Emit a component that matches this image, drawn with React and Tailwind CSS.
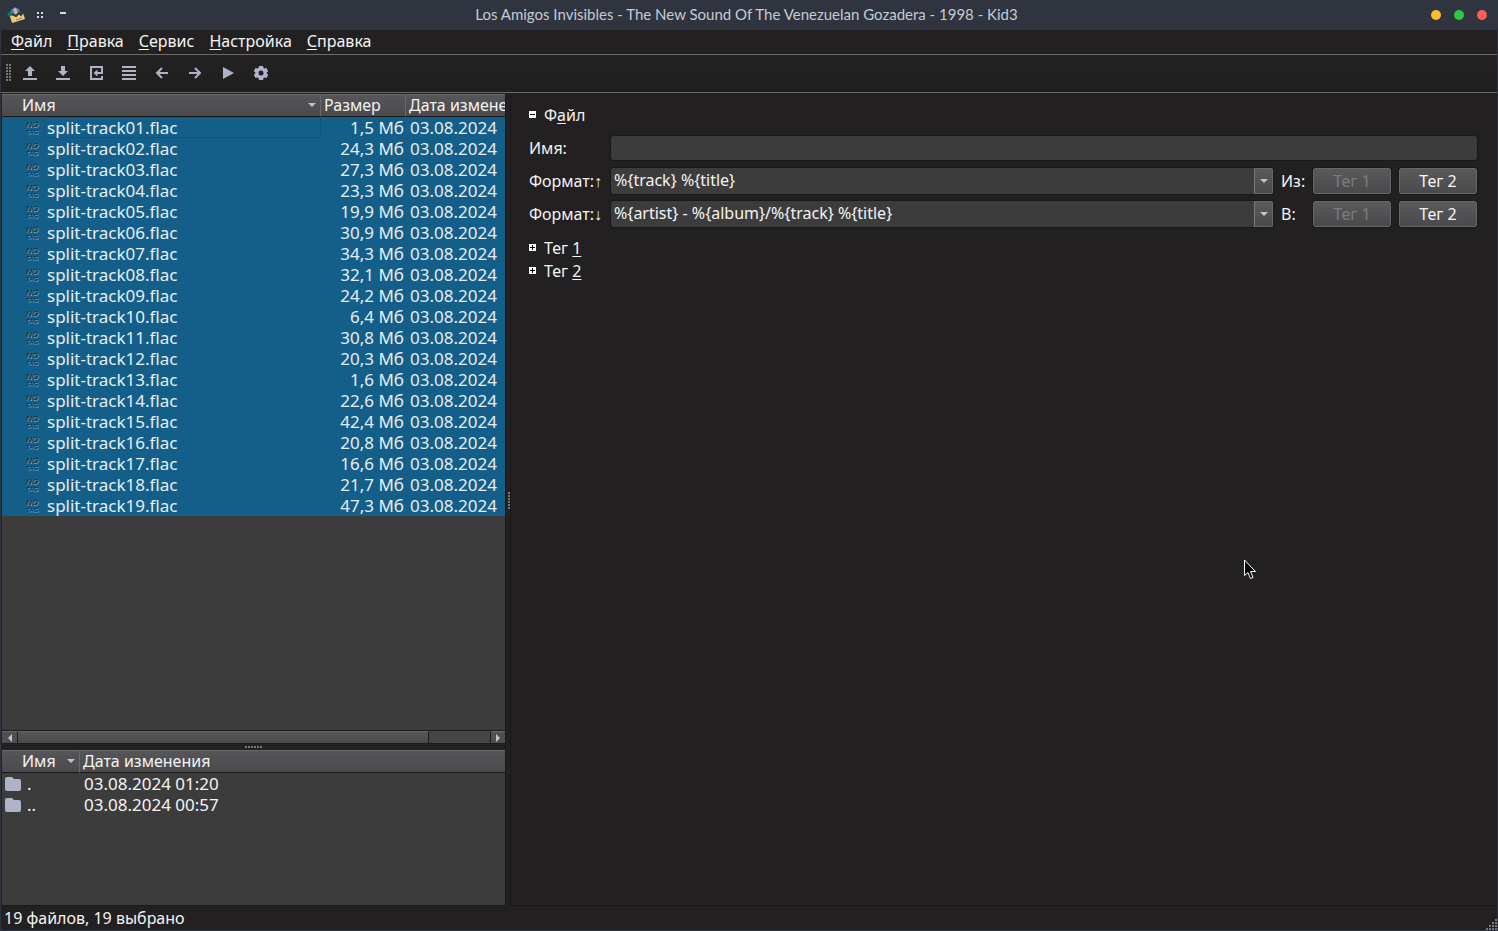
import React, { useState } from 'react';

const files = [
  ['split-track01.flac', '1,5 Мб'],
  ['split-track02.flac', '24,3 Мб'],
  ['split-track03.flac', '27,3 Мб'],
  ['split-track04.flac', '23,3 Мб'],
  ['split-track05.flac', '19,9 Мб'],
  ['split-track06.flac', '30,9 Мб'],
  ['split-track07.flac', '34,3 Мб'],
  ['split-track08.flac', '32,1 Мб'],
  ['split-track09.flac', '24,2 Мб'],
  ['split-track10.flac', '6,4 Мб'],
  ['split-track11.flac', '30,8 Мб'],
  ['split-track12.flac', '20,3 Мб'],
  ['split-track13.flac', '1,6 Мб'],
  ['split-track14.flac', '22,6 Мб'],
  ['split-track15.flac', '42,4 Мб'],
  ['split-track16.flac', '20,8 Мб'],
  ['split-track17.flac', '16,6 Мб'],
  ['split-track18.flac', '21,7 Мб'],
  ['split-track19.flac', '47,3 Мб'],
];

const folders = [
  ['.', '03.08.2024 01:20'],
  ['..', '03.08.2024 00:57'],
];

const menus = [
  ['Ф', 'айл'],
  ['П', 'равка'],
  ['С', 'ервис'],
  ['Н', 'астройка'],
  ['С', 'правка'],
];

const tools = [
  { label: 'Открыть', icon: <path d="M8 1l5 5h-3v5H6V6H3zM1 13h14v2H1z" fill="currentColor" /> },
  { label: 'Сохранить', icon: <path d="M6 1h4v5h3l-5 5-5-5h3zM1 13h14v2H1z" fill="currentColor" /> },
  {
    label: 'Вернуть',
    icon: (
      <>
        <path d="M14 5V2H3v12h11v-3" fill="none" stroke="currentColor" strokeWidth="2" />
        <path d="M15 4v5H9.500v2.500L5.500 8l4-3.500V7H13V4z" fill="currentColor" />
      </>
    ),
  },
  { label: 'Выделить всё', icon: <path d="M1 1h14v2H1zM1 5h14v2H1zM1 9h14v2H1zM1 13h14v2H1z" fill="currentColor" /> },
  { label: 'Предыдущий файл', icon: <path d="M14 8H3M8 3L3 8l5 5" fill="none" stroke="currentColor" strokeWidth="2" /> },
  { label: 'Следующий файл', icon: <path d="M2 8h11M8 3l5 5-5 5" fill="none" stroke="currentColor" strokeWidth="2" /> },
  { label: 'Воспроизвести', icon: <path d="M3 2l11 6-11 6z" fill="currentColor" /> },
  {
    label: 'Настроить',
    icon: (
      <path
        fillRule="evenodd"
        fill="currentColor"
        d="M6 1h4l.5 2 1 .6 2-.6 1.700 3.200L13.700 7.500v1l1.500 1.300L13.500 13l-2-.6-1 .6-.5 2H6l-.5-2-1-.6-2 .6L.8 9.800 2.300 8.500v-1L.8 6.200 2.500 3l2 .6 1-.6zM8 5.500a2.500 2.500 0 1 0 0 5 2.500 2.500 0 0 0 0-5z"
      />
    ),
  },
];

function AppLogo() {
  return (
    <svg width="20" height="18" viewBox="0 0 20 18" aria-hidden="true">
      <path d="M1 8l5-5 3 2-1 8H5z" fill="#0d7182" />
      <path d="M5 4l4-3 4 2 2 5-4 5-5-2z" fill="#5f7896" />
      <path d="M7 3l3-1 2 5-3 2z" fill="#a9bbd2" />
      <path d="M4 10l13-3 2 6-13 4z" fill="#e6cf78" />
      <path d="M6 8l4 2 3-3 2 2 2-3" fill="none" stroke="#3b3526" strokeWidth="2" />
      <path d="M10 14l6-2" stroke="#b5715a" strokeWidth="1" />
    </svg>
  );
}

function NoTagIcon() {
  return (
    <svg width="14" height="16" viewBox="0 0 14 16" className="shrink-0 font-['Liberation_Sans',sans-serif] text-[8px] italic" aria-hidden="true">
      <text x="1" y="8" fill="#8ba9b8">NO</text>
      <text x="0" y="7" fill="#0c2a3a">NO</text>
      <text x="1" y="15" fontSize="6" fill="#8ba9b8">TAG</text>
      <text x="0" y="14" fontSize="6" fill="#0c2a3a">TAG</text>
    </svg>
  );
}

function FolderIcon() {
  return (
    <svg width="16" height="14" viewBox="0 0 16 14" className="shrink-0" aria-hidden="true">
      <path d="M2 0h5l2 2h5q2 0 2 2v8q0 2-2 2H2q-2 0-2-2V2q0-2 2-2z" fill="#aeb3c8" />
    </svg>
  );
}

function DownArrow() {
  return (
    <svg width="8" height="4" viewBox="0 0 8 4" className="shrink-0" aria-hidden="true">
      <path d="M0 0h8L4 4z" fill="#c4c4c4" />
    </svg>
  );
}

function Dots({ className, count }) {
  return (
    <div className={className} aria-hidden="true">
      {Array.from({ length: count }, (_, i) => (
        <span key={i} className="size-[2px] bg-[#777777]" />
      ))}
    </div>
  );
}

function HeaderCell({ children, sorted, last }) {
  return (
    <th
      className={
        'h-[23px] border-b border-t border-b-[#19191a] border-t-[#68686a] bg-linear-to-b from-[#565658] to-[#4a4a4c] p-0 text-left font-normal' +
        (last ? '' : ' border-r border-r-[#68686a]')
      }
    >
      <div className={'flex h-[21px] items-center justify-between pb-px ' + (sorted ? 'pl-5 pr-1' : 'pl-[3px]')}>
        <span className="whitespace-nowrap">{children}</span>
        {sorted && <DownArrow />}
      </div>
    </th>
  );
}

function FileList() {
  return (
    <div className="flex min-h-0 flex-1 flex-col bg-[#3c3c3c]">
      <div className="min-h-0 flex-1 overflow-hidden">
        <table className="w-[575px] table-fixed border-separate border-spacing-0 leading-[21px]">
          <colgroup>
            <col className="w-[319px]" />
            <col className="w-[85px]" />
            <col />
          </colgroup>
          <thead>
            <tr>
              <HeaderCell sorted>Имя</HeaderCell>
              <HeaderCell>Размер</HeaderCell>
              <HeaderCell last>Дата изменения</HeaderCell>
            </tr>
          </thead>
          <tbody className="text-[17px]">
            {files.map(([name, size], i) => (
              <tr key={name} className="h-[21px] bg-[#135f89] text-[#e8eef2]">
                <td className="p-0">
                  <div className="flex h-[21px] items-center gap-1 pl-6">
                    <NoTagIcon />
                    <span className={'flex-1 border pl-[2px] leading-[19px] ' + (i === 0 ? 'border-[#10557b]' : 'border-transparent')}>{name}</span>
                  </div>
                </td>
                <td className="whitespace-nowrap p-0 pr-[2px] text-right">{size}</td>
                <td className="whitespace-nowrap p-0 pl-1">03.08.2024</td>
              </tr>
            ))}
          </tbody>
        </table>
      </div>
      <div className="flex h-[14px] border-y border-[#1b1b1b] bg-[#464648]">
        <button type="button" aria-label="Прокрутить влево" className="flex w-4 items-center justify-center border-r border-t border-r-[#1b1b1b] border-t-[#68686a] bg-[#505052]">
          <svg width="4" height="8" viewBox="0 0 4 8"><path d="M4 0v8L0 4z" fill="#c4c4c4" /></svg>
        </button>
        <div className="flex flex-1">
          <div className="w-[87%] border-r border-t border-r-[#1b1b1b] border-t-[#68686a] bg-linear-to-b from-[#565658] to-[#4a4a4c]" />
        </div>
        <button type="button" aria-label="Прокрутить вправо" className="flex w-[15px] items-center justify-center border-l border-t border-l-[#1b1b1b] border-t-[#68686a] bg-[#505052]">
          <svg width="4" height="8" viewBox="0 0 4 8"><path d="M0 0v8l4-4z" fill="#c4c4c4" /></svg>
        </button>
      </div>
    </div>
  );
}

function FolderList() {
  return (
    <div className="h-[155px] shrink-0 overflow-hidden bg-[#3c3c3c]">
      <table className="w-full table-fixed border-separate border-spacing-0 leading-[21px]">
        <colgroup>
          <col className="w-[78px]" />
          <col />
        </colgroup>
        <thead>
          <tr>
            <HeaderCell sorted>Имя</HeaderCell>
            <HeaderCell last>Дата изменения</HeaderCell>
          </tr>
        </thead>
        <tbody className="text-[17px]">
          {folders.map(([name, date]) => (
            <tr key={name} className="h-[21px]">
              <td className="p-0">
                <div className="flex items-center gap-[6px] pl-[3px]">
                  <FolderIcon />
                  <span>{name}</span>
                </div>
              </td>
              <td className="p-0 pl-1">{date}</td>
            </tr>
          ))}
        </tbody>
      </table>
    </div>
  );
}

function SectionToggle({ open, onClick, children }) {
  return (
    <button type="button" aria-expanded={open} onClick={onClick} className="flex h-[23px] items-center gap-2 text-left">
      <svg width="7" height="7" viewBox="0 0 7 7" aria-hidden="true">
        <path d="M0 0h7v7H0z" fill="#ffffff" />
        <path d={open ? 'M1 3h5v1H1z' : 'M1 3h5v1H1zM3 1h1v5H3z'} fill="#000000" />
      </svg>
      <span className="whitespace-pre">{children}</span>
    </button>
  );
}

function TagButton({ disabled, children }) {
  return (
    <button
      type="button"
      disabled={disabled}
      className="h-[26px] w-[78px] shrink-0 rounded-xs border border-[#68686a] bg-linear-to-b from-[#5a5a5c] to-[#4a4a4c] outline outline-[#19191a] disabled:text-[#7c7c7c]"
    >
      {children}
    </button>
  );
}

function FormatRow({ id, label, format, target }) {
  return (
    <div className="flex h-[26px] items-center">
      <label htmlFor={id} className="w-[82px] shrink-0">{label}</label>
      <div className="relative flex-1">
        <select id={id} className="block h-[26px] w-full appearance-none rounded-xs bg-[#3c3c3c] pb-[2px] pl-[3px] outline outline-[#19191a]">
          <option>{format}</option>
        </select>
        <span className="pointer-events-none absolute inset-y-0 right-0 flex w-[19px] items-center justify-center rounded-r-xs border border-[#68686a] border-l-[#7a7a7c] bg-linear-to-b from-[#5a5a5c] to-[#4a4a4c]">
          <DownArrow />
        </span>
      </div>
      <span className="w-10 shrink-0 pl-2">{target}</span>
      <div className="flex gap-2">
        <TagButton disabled>Тег 1</TagButton>
        <TagButton>Тег 2</TagButton>
      </div>
    </div>
  );
}

function TagPanel() {
  const [fileName, setFileName] = useState('');
  const [fileOpen, setFileOpen] = useState(true);

  return (
    <main className="min-w-0 flex-1 border-b border-l border-[#19191a] pb-4 pl-[18px] pr-5 pt-[9px]">
      <SectionToggle open={fileOpen} onClick={() => setFileOpen(!fileOpen)}>
        Ф<u className="underline-offset-2">а</u>йл
      </SectionToggle>
      {fileOpen && (
        <div className="mb-[9px] mt-[9px] flex flex-col gap-[7px]">
          <div className="flex h-[26px] items-center">
            <label htmlFor="name" className="w-[82px] shrink-0">Имя:</label>
            <input
              id="name"
              type="text"
              value={fileName}
              onChange={(e) => setFileName(e.target.value)}
              className="h-6 min-w-0 flex-1 rounded-xs bg-[#3c3c3c] px-[3px] outline outline-[#19191a]"
            />
          </div>
          <FormatRow id="format-up" label="Формат:↑" format="%{track} %{title}" target="Из:" />
          <FormatRow id="format-down" label="Формат:↓" format="%{artist} - %{album}/%{track} %{title}" target="В:" />
        </div>
      )}
      <SectionToggle>Тег <u className="underline-offset-2">1</u></SectionToggle>
      <SectionToggle>Тег <u className="underline-offset-2">2</u></SectionToggle>
    </main>
  );
}

export default function App() {
  return (
    <div className="relative flex h-screen flex-col overflow-hidden bg-[#2f343f] font-['Noto_Sans',sans-serif] text-base text-[#f4f4f4]">
      <header className="flex h-[30px] shrink-0 items-center px-[6px]">
        <div className="flex flex-1 items-center">
          <AppLogo />
          <svg width="50" height="16" viewBox="0 0 50 16" aria-hidden="true">
            <path d="M11 5h2v2h-2zM15 5h2v2h-2zM11 9h2v2h-2zM15 9h2v2h-2zM34 5h6v2h-6z" fill="#d3dae3" />
          </svg>
        </div>
        <h1 className="pb-[2px] font-['Lato',sans-serif] text-[15px] text-[#c5cbd6]">
          Los Amigos Invisibles - The New Sound Of The Venezuelan Gozadera - 1998 - Kid3
        </h1>
        <div className="flex flex-1 justify-end gap-[13px] pr-[5px]">
          <button type="button" aria-label="Свернуть" className="size-[10px] rounded-full bg-[#fdbc2e]" />
          <button type="button" aria-label="Развернуть" className="size-[10px] rounded-full bg-[#2acb42]" />
          <button type="button" aria-label="Закрыть" className="size-[10px] rounded-full bg-[#fd5f57]" />
        </div>
      </header>

      <div className="mx-px mb-px flex min-h-0 flex-1 flex-col bg-[#222021]">
        <nav className="flex h-[25px] shrink-0 items-center gap-[15px] border-b border-[#6b6b6b] pb-[2px] pl-[10px]">
          {menus.map(([key, rest]) => (
            <button type="button" key={key + rest}>
              <u className="underline-offset-2">{key}</u>{rest}
            </button>
          ))}
        </nav>
        <div className="flex h-[38px] shrink-0 items-center border-b border-[#6b6b6b] bg-linear-to-b from-[#242223] to-[#1f1e1f] pb-[2px] pl-[5px]">
          <Dots count={12} className="mr-[11px] grid grid-cols-2 gap-px" />
          <div className="flex gap-[17px] text-[#aeb3c8]">
            {tools.map((tool) => (
              <button type="button" key={tool.label} aria-label={tool.label}>
                <svg width="16" height="16" viewBox="0 0 16 16">{tool.icon}</svg>
              </button>
            ))}
          </div>
        </div>

        <div className="flex min-h-0 flex-1 pl-px pt-px">
          <aside className="flex w-[34%] max-w-[504px] flex-col border-b border-r border-[#19191a]">
            <FileList />
            <div className="flex h-[6px] shrink-0 items-center justify-center">
              <Dots count={6} className="flex gap-px" />
            </div>
            <FolderList />
          </aside>
          <div className="flex w-[4px] shrink-0 items-center justify-end">
            <Dots count={6} className="flex flex-col gap-px" />
          </div>
          <TagPanel />
        </div>

        <footer className="flex h-6 shrink-0 items-center justify-between pl-[3px]">
          <span>19 файлов, 19 выбрано</span>
          <svg width="11" height="11" viewBox="0 0 11 11" className="self-end" aria-hidden="true">
            <path d="M9 0h2v2H9zM6 3h2v2H6zM9 3h2v2H9zM3 6h2v2H3zM6 6h2v2H6zM9 6h2v2H9zM0 9h2v2H0zM3 9h2v2H3zM6 9h2v2H6zM9 9h2v2H9z" fill="#777777" />
          </svg>
        </footer>
      </div>

      {/* mouse pointer */}
      <svg width="12" height="21" viewBox="0 0 12 21" className="pointer-events-none absolute left-[1244px] top-[559px]" aria-hidden="true">
        <path d="M.5 1v15.500l3.500-3 2.500 6 2.500-1-2.500-6H11.500z" fill="#000000" stroke="#ffffff" />
      </svg>
    </div>
  );
}
